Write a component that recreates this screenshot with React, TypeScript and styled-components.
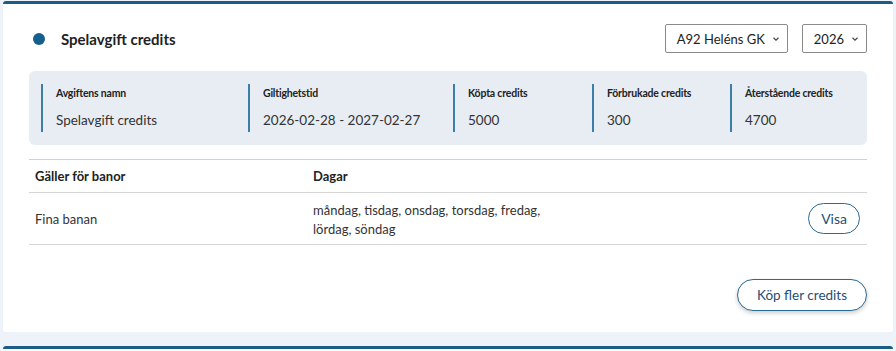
import React from "react";
import styled, { createGlobalStyle } from "styled-components";

const GlobalStyle = createGlobalStyle`
  html, body {
    margin: 0;
    padding: 0;
    background: #eef3fa;
    font-family: Lato, "Open Sans", Arial, sans-serif;
    color: #2b2b2b;
  }
`;

const Page = styled.div`
  display: flex;
  flex-direction: column;
  gap: 14px;
  padding: 1px 3px 0 3px;
`;

const Card = styled.section`
  background: #fff;
  border-top: 3px solid #1b5d87;
  border-radius: 3px;
  padding: 20px 26px 21px 26px;
`;

const Header = styled.div`
  display: flex;
  align-items: center;
  justify-content: space-between;
  height: 29px;
`;

const TitleWrap = styled.div`
  display: flex;
  align-items: center;
  gap: 16px;
  padding-left: 4px;
`;

const Dot = styled.span`
  width: 12px;
  height: 12px;
  border-radius: 50%;
  background: #155f8e;
`;

const Title = styled.h2`
  margin: 0;
  font-size: 15px;
  font-weight: 700;
  color: #222;
`;

const Selects = styled.div`
  display: flex;
  gap: 14px;
`;

const Select = styled.div`
  display: flex;
  align-items: center;
  gap: 7px;
  height: 27px;
  padding: 0 7px 0 11px;
  border: 1px solid #8a8a8a;
  border-radius: 2px;
  font-size: 13px;
  color: #222;
  background: #fff;
`;

const Chevron = () => (
  <svg width="8" height="6" viewBox="0 0 8 6">
    <path d="M1.5 1.8 L4 4.2 L6.5 1.8" fill="none" stroke="#444" strokeWidth="1.2" />
  </svg>
);

const InfoPanel = styled.div`
  margin-top: 18px;
  background: #e8edf4;
  border-radius: 6px;
  height: 74px;
  display: grid;
  grid-template-columns: 207px 205px 139px 138px 1fr;
  align-items: center;
  padding: 0 12px;
`;

const InfoCell = styled.div`
  border-left: 2px solid #3b7fa8;
  padding-left: 13px;
  height: 48px;
  display: flex;
  flex-direction: column;
  justify-content: space-between;
`;

const InfoLabel = styled.div`
  font-size: 10.5px;
  font-weight: 700;
  color: #222;
  letter-spacing: -0.2px;
  margin-top: 3px;
`;

const InfoValue = styled.div`
  font-size: 13.5px;
  color: #333;
  margin-bottom: 4px;
`;

const Table = styled.div`
  margin-top: 14px;
  border-top: 1px solid #d6d1cb;
`;

const Row = styled.div<{ $head?: boolean }>`
  display: grid;
  grid-template-columns: 278px 1fr auto;
  align-items: center;
  border-bottom: 1px solid #d6d6d6;
  padding: 0 7px 0 6px;
  height: ${(p) => (p.$head ? "32px" : "51px")};
  font-size: 13px;
  font-weight: ${(p) => (p.$head ? 700 : 400)};
  color: ${(p) => (p.$head ? "#222" : "#333")};
`;

const Days = styled.div`
  line-height: 19px;
  margin-top: 2px;
`;

const PillButton = styled.button<{ $wide?: boolean }>`
  font-family: Lato, "Open Sans", Arial, sans-serif;
  font-size: ${(p) => (p.$wide ? "13.5px" : "14px")};
  color: #1e4f74;
  background: #fff;
  border: 1px solid #2a6a95;
  border-radius: 999px;
  padding: 0 ${(p) => (p.$wide ? "19px" : "12px")};
  height: ${(p) => (p.$wide ? "32px" : "31px")};
  cursor: pointer;
  box-shadow: ${(p) => (p.$wide ? "0 2px 4px rgba(0,0,0,0.2)" : "none")};
`;

const Footer = styled.div`
  display: flex;
  justify-content: flex-end;
  margin-top: 34px;
`;

const NextCard = styled.div`
  background: #fff;
  border-top: 3px solid #1b5d87;
  border-radius: 3px;
  height: 10px;
`;

const App: React.FC = () => {
  return (
    <>
      <GlobalStyle />
      <Page>
        <Card>
          <Header>
            <TitleWrap>
              <Dot />
              <Title>Spelavgift credits</Title>
            </TitleWrap>
            <Selects>
              <Select>
                A92 Heléns GK <Chevron />
              </Select>
              <Select>
                2026 <Chevron />
              </Select>
            </Selects>
          </Header>

          <InfoPanel>
            <InfoCell>
              <InfoLabel>Avgiftens namn</InfoLabel>
              <InfoValue>Spelavgift credits</InfoValue>
            </InfoCell>
            <InfoCell>
              <InfoLabel>Giltighetstid</InfoLabel>
              <InfoValue>2026-02-28 - 2027-02-27</InfoValue>
            </InfoCell>
            <InfoCell>
              <InfoLabel>Köpta credits</InfoLabel>
              <InfoValue>5000</InfoValue>
            </InfoCell>
            <InfoCell>
              <InfoLabel>Förbrukade credits</InfoLabel>
              <InfoValue>300</InfoValue>
            </InfoCell>
            <InfoCell>
              <InfoLabel>Återstående credits</InfoLabel>
              <InfoValue>4700</InfoValue>
            </InfoCell>
          </InfoPanel>

          <Table>
            <Row $head>
              <div>Gäller för banor</div>
              <div>Dagar</div>
              <div />
            </Row>
            <Row>
              <div>Fina banan</div>
              <Days>
                måndag, tisdag, onsdag, torsdag, fredag,
                <br />
                lördag, söndag
              </Days>
              <PillButton>Visa</PillButton>
            </Row>
          </Table>

          <Footer>
            <PillButton $wide>Köp fler credits</PillButton>
          </Footer>
        </Card>
        <NextCard />
      </Page>
    </>
  );
};

export default App;
